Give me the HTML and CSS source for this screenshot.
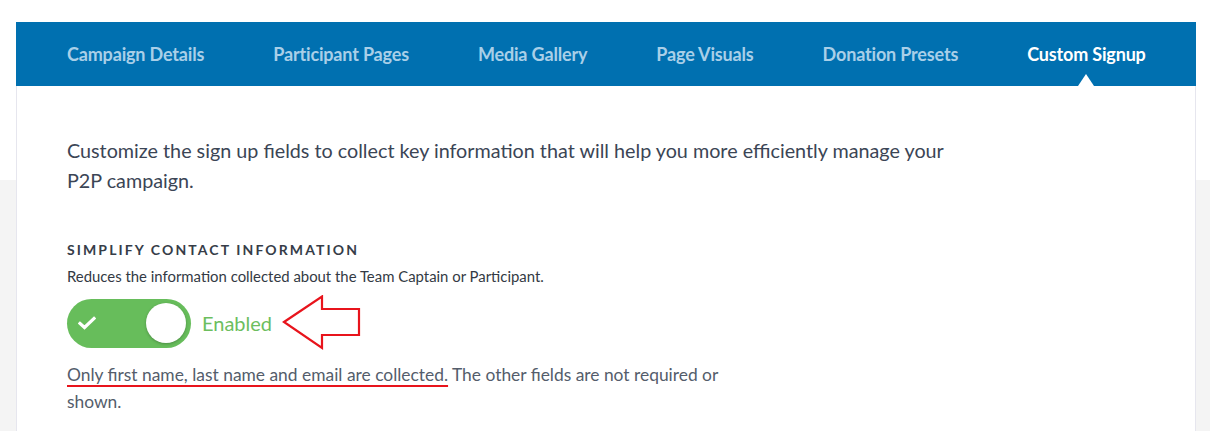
FILE: index.html
```html
<!DOCTYPE html>
<html>
<head>
<meta charset="utf-8">
<link rel="stylesheet" href="styles.css">
</head>
<body>
<div class="page">
  <div class="card">
    <nav class="tabs">
      <a class="tab">Campaign Details</a>
      <a class="tab">Participant Pages</a>
      <a class="tab">Media Gallery</a>
      <a class="tab">Page Visuals</a>
      <a class="tab">Donation Presets</a>
      <a class="tab active">Custom Signup</a>
    </nav>
    <div class="content">
      <p class="intro">Customize the sign up fields to collect key information that will help you more efficiently manage your P2P campaign.</p>
      <h3 class="section-title">Simplify Contact Information</h3>
      <p class="section-desc">Reduces the information collected about the Team Captain or Participant.</p>
      <div class="toggle-row">
        <div class="toggle">
          <svg class="check" width="18" height="14" viewBox="0 0 18 14"><path d="M2 7.5 L6.5 11.5 L16 2.5" fill="none" stroke="#fff" stroke-width="3.2" stroke-linecap="square"/></svg>
          <span class="knob"></span>
        </div>
        <span class="toggle-label">Enabled</span>
        <svg class="arrow" width="80" height="56" viewBox="0 0 80 56"><polygon points="2,27 40,1.5 40,14 77,14 77,40 40,40 40,53" fill="none" stroke="#e8141c" stroke-width="2.2"/></svg>
      </div>
      <p class="note"><span class="mark">Only first name, last name and email are collected.</span> The other fields are not required or shown.</p>
    </div>
  </div>
</div>
</body>
</html>
```
FILE: styles.css
```css
html, body {
  margin: 0;
  padding: 0;
}
body {
  font-family: Lato, "Open Sans", "Liberation Sans", sans-serif;
  background: #f4f4f4;
}
.page {
  background: linear-gradient(to bottom, #ffffff 0, #ffffff 180px, #f4f4f4 180px);
  height: 431px;
  padding-top: 22px;
  box-sizing: border-box;
  overflow: hidden;
}
.card {
  margin-left: 16px;
  width: 1180px;
  background: #fff;
  border-left: 1px solid #e6e6ee;
  border-right: 1px solid #e6e6ee;
  box-sizing: border-box;
  height: 409px;
}
.tabs {
  display: flex;
  align-items: center;
  height: 64px;
  background: #0070b0;
  margin: 0 -1px;
  padding-left: 51px;
  gap: 69px;
}
.tab {
  position: relative;
  font-size: 18px;
  font-weight: 700;
  color: #a9cfe8;
  letter-spacing: -0.17px;
  white-space: nowrap;
}
.tab.active {
  color: #fff;
}
.tab.active::after {
  content: "";
  position: absolute;
  left: 50%;
  margin-left: -8px;
  bottom: -21px;
  border-left: 8px solid transparent;
  border-right: 8px solid transparent;
  border-bottom: 12px solid #fff;
}
.content {
  padding: 50px 0 0 50px;
}
.intro {
  margin: 0;
  max-width: 900px;
  font-size: 19.75px;
  line-height: 30px;
  color: #3b4555;
}
.section-title {
  margin: 44px 0 0;
  font-size: 14px;
  line-height: 20px;
  font-weight: 700;
  text-transform: uppercase;
  letter-spacing: 2.1px;
  color: #363d48;
}
.section-desc {
  margin: 6px 0 0;
  font-size: 14.9px;
  line-height: 20px;
  color: #333a44;
}
.toggle-row {
  display: flex;
  align-items: center;
  margin-top: 12px;
  height: 50px;
}
.toggle {
  position: relative;
  width: 124px;
  height: 49px;
  border-radius: 25px;
  background: #67bd5b;
  display: flex;
  align-items: center;
  justify-content: space-between;
  padding: 0 5px 0 11px;
  box-sizing: border-box;
}
.check {
  display: block;
}
.knob {
  width: 40px;
  height: 40px;
  border-radius: 50%;
  background: #fff;
  box-shadow: 0 1px 3px rgba(0,0,0,0.25);
}
.toggle-label {
  margin-left: 11px;
  font-size: 20px;
  color: #6cbe5e;
}
.arrow {
  margin-left: 10px;
  display: block;
}
.note {
  margin: 13px 0 0;
  max-width: 690px;
  font-size: 17.4px;
  line-height: 27px;
  color: #545d6b;
}
.mark {
  text-decoration: underline;
  text-decoration-color: #e8141c;
  text-decoration-thickness: 2px;
  text-underline-offset: 4px;
}
```
